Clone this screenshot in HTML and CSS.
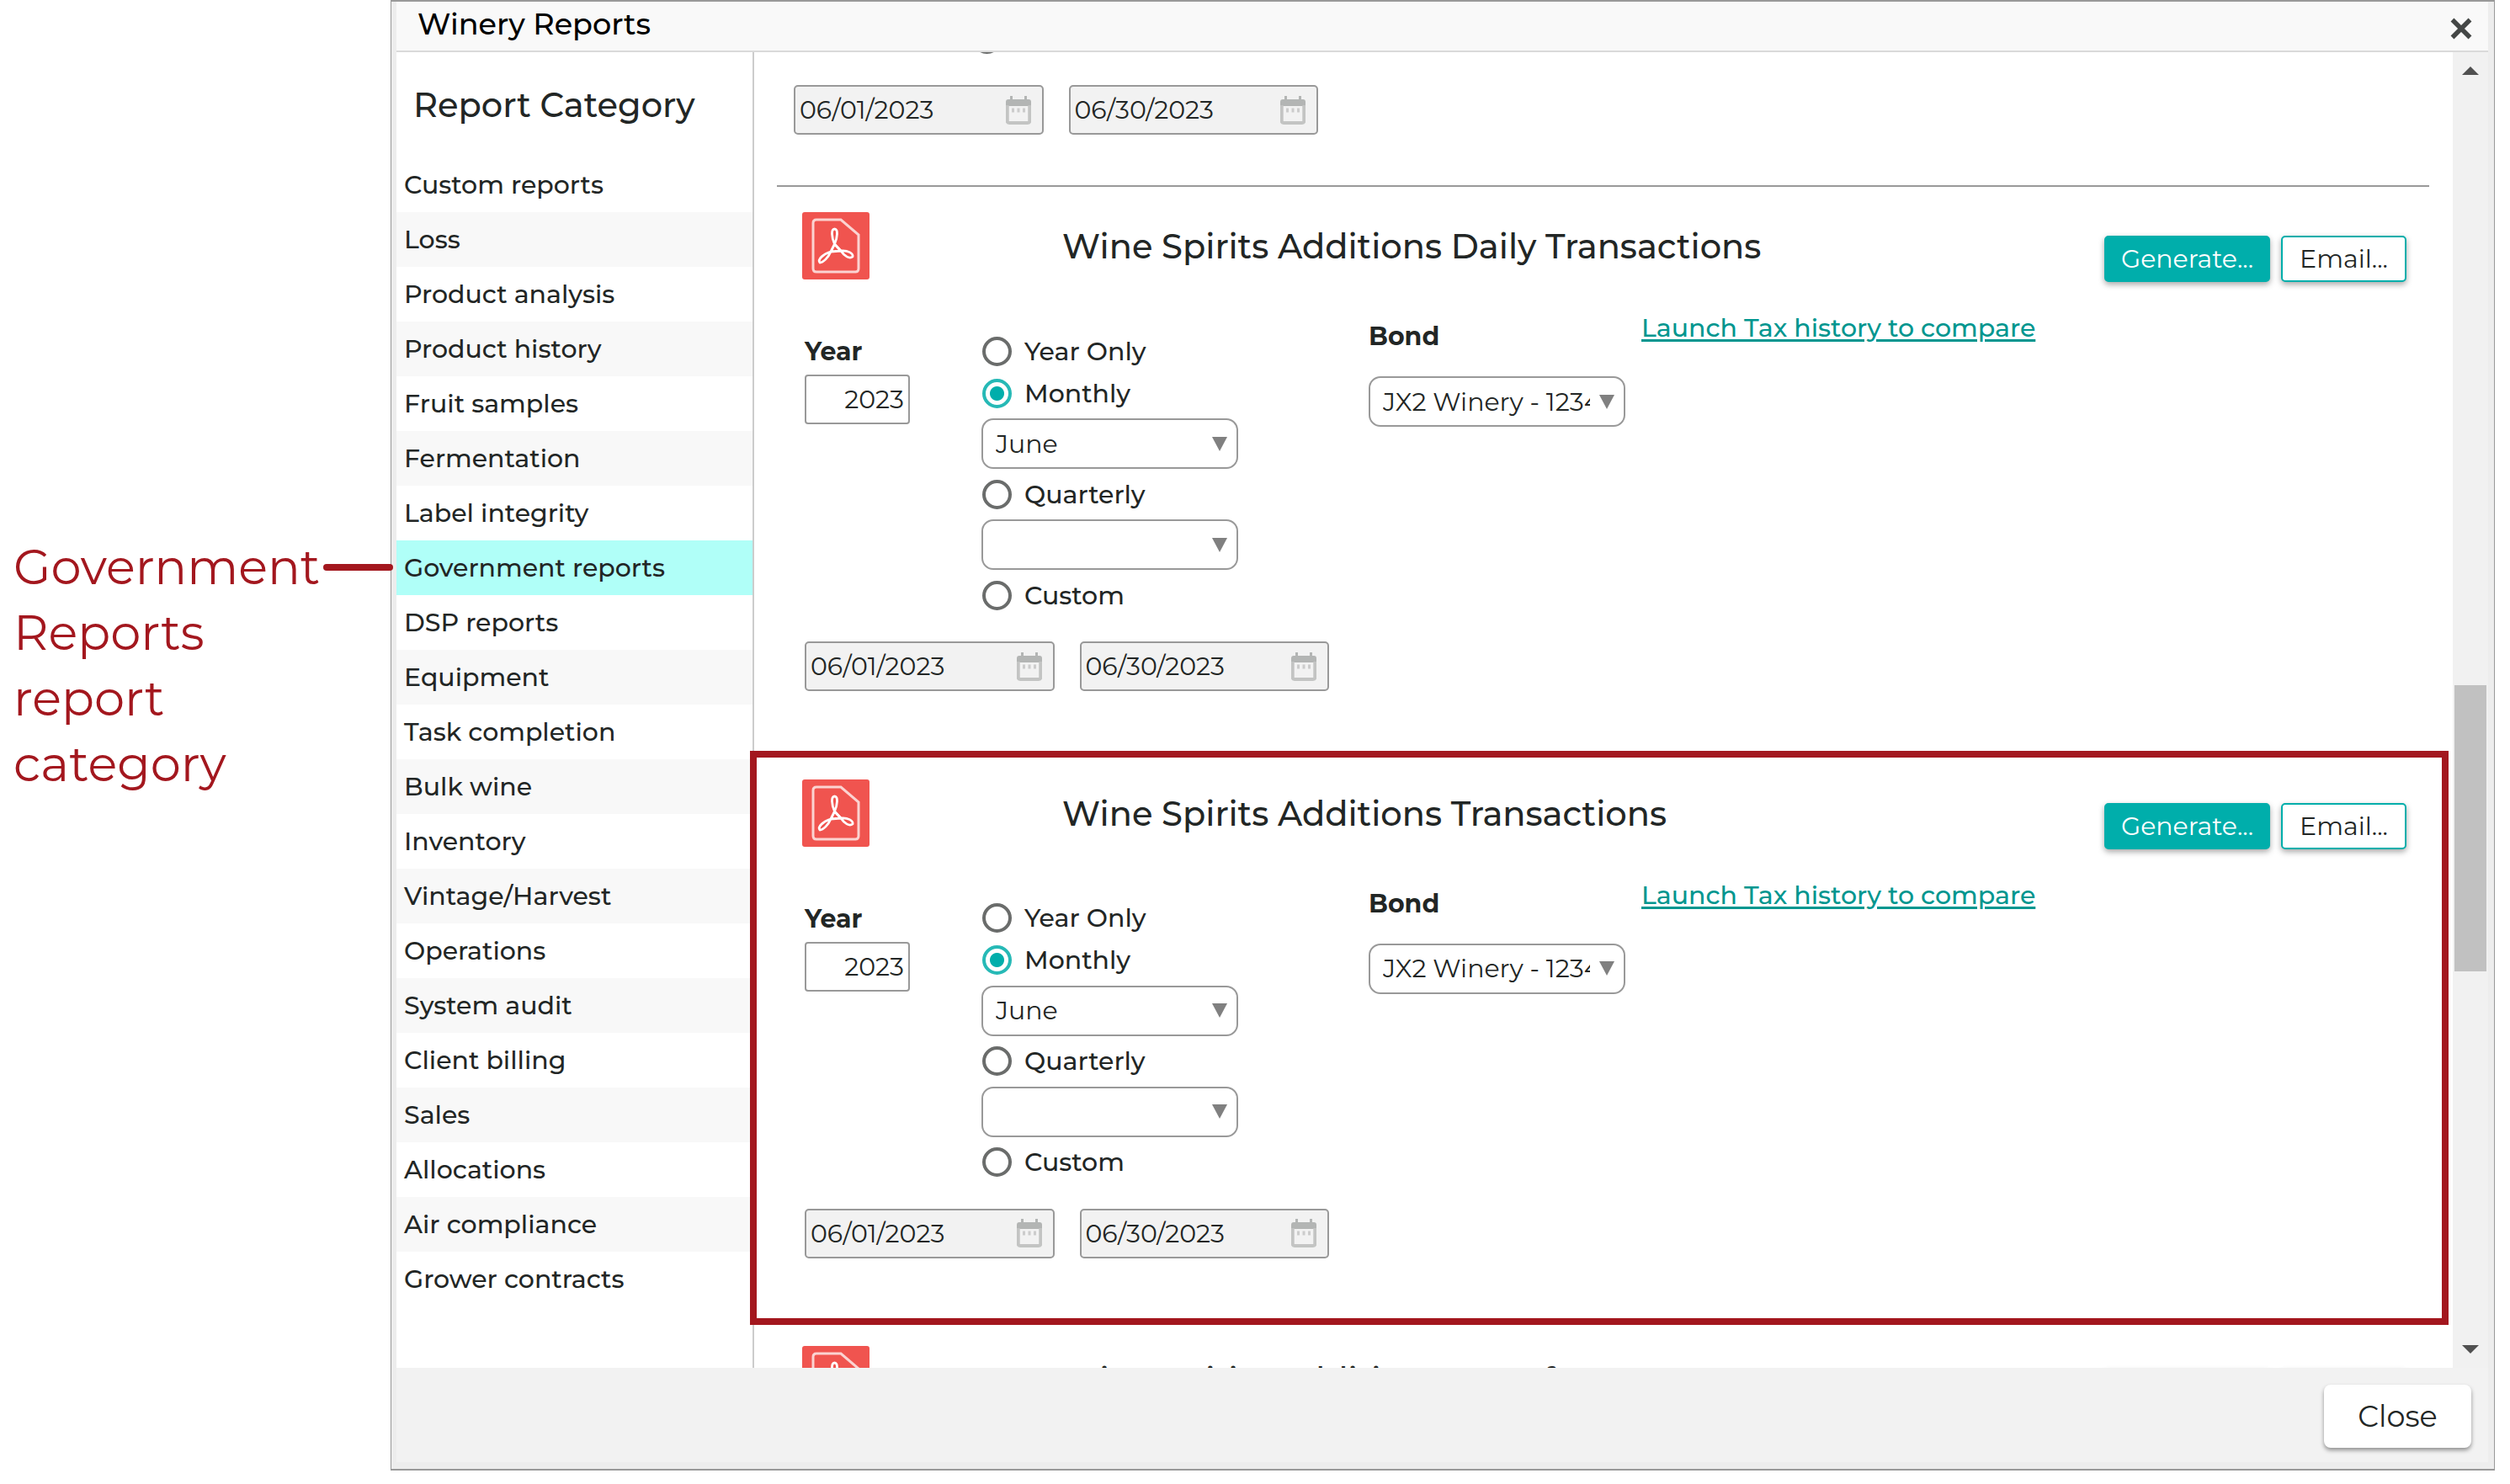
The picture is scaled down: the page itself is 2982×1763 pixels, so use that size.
FILE: index.html
```
<!DOCTYPE html>
<html lang="en">
  <head>
    <meta charset="utf-8">
    <title>Winery Reports</title>
    <link rel="stylesheet" href="styles.css">
  </head>
  <body>
    <svg class="sprite">
      <symbol id="pdf" viewBox="0 0 80 80">
        <rect width="80" height="80" rx="3" fill="#f0544f"/>
        <path d="M17 9H46L67 27V67Q67 71 63 71H17Q13 71 13 67V13Q13 9 17 9Z" fill="none" stroke="#fbd3d1" stroke-width="3"/>
        <path d="M38.500 38C35 30 34 20 38.500 20C43 20 42 30 38.500 38L34 47C31 54 25 60 21 60C18 56 25 50 34 47L46 46C54 45 61 49 60 53C56 56 50 52 46 46Z" fill="none" stroke="#fff" stroke-width="2.8" stroke-linejoin="round"/>
        <path d="M38.500 38L46 46" stroke="#fff" stroke-width="2.8"/>
      </symbol>
      <symbol id="calendar" viewBox="0 0 30 34">
        <path d="M5 0H8V4H22V0H25V4H27Q30 4 30 7V12H0V7Q0 4 3 4H5Z" fill="#b3b5b4"/>
        <path d="M1.700 11V29.500Q1.700 32 4 32H26Q28.300 32 28.300 29.500V11" fill="none" stroke="#c3c4c3" stroke-width="4"/>
        <path d="M7 17H10M13.500 17H16.500M20 17H23" stroke="#ccc" stroke-width="5"/>
      </symbol>
    </svg>

    <aside class="annotation">
      <span>Government</span>
      <span>Reports</span>
      <span>report</span>
      <span>category</span>
      <i class="pointer"></i>
    </aside>

    <div class="dialog">
      <header class="titlebar">
        <h1>Winery Reports</h1>
        <svg class="close-x" viewBox="0 0 26 26"><path d="M2.500 2.500L23.500 23.500M23.500 2.500L2.500 23.500" stroke="#444746" stroke-width="5.5"/></svg>
      </header>

      <div class="main">
        <nav class="categories">
          <h2>Report Category</h2>
          <ul>
            <li>Custom reports</li>
            <li>Loss</li>
            <li>Product analysis</li>
            <li>Product history</li>
            <li>Fruit samples</li>
            <li>Fermentation</li>
            <li>Label integrity</li>
            <li class="selected">Government reports</li>
            <li>DSP reports</li>
            <li>Equipment</li>
            <li>Task completion</li>
            <li>Bulk wine</li>
            <li>Inventory</li>
            <li>Vintage/Harvest</li>
            <li>Operations</li>
            <li>System audit</li>
            <li>Client billing</li>
            <li>Sales</li>
            <li>Allocations</li>
            <li>Air compliance</li>
            <li>Grower contracts</li>
          </ul>
        </nav>

        <div class="reports">
          <section class="report-tail">
            <div class="radio"><i></i></div>
            <div class="dates">
              <div class="date">06/01/2023<svg><use href="#calendar"/></svg></div>
              <div class="date">06/30/2023<svg><use href="#calendar"/></svg></div>
            </div>
          </section>

          <section class="report">
            <div class="report-head">
              <svg class="pdf"><use href="#pdf"/></svg>
              <h3>Wine Spirits Additions Daily Transactions</h3>
              <button class="btn primary">Generate...</button>
              <button class="btn">Email...</button>
            </div>
            <div class="report-body">
              <div class="period">
                <div class="period-options">
                  <div class="year">
                    <b>Year</b>
                    <div class="year-input">2023</div>
                  </div>
                  <div class="options">
                    <div class="radio"><i></i>Year Only</div>
                    <div class="radio checked"><i></i>Monthly</div>
                    <div class="select"><span>June</span></div>
                    <div class="radio"><i></i>Quarterly</div>
                    <div class="select"><span></span></div>
                    <div class="radio"><i></i>Custom</div>
                  </div>
                </div>
                <div class="dates">
                  <div class="date">06/01/2023<svg><use href="#calendar"/></svg></div>
                  <div class="date">06/30/2023<svg><use href="#calendar"/></svg></div>
                </div>
              </div>
              <div class="bond">
                <b>Bond</b>
                <div class="select"><span>JX2 Winery - 1234</span></div>
              </div>
              <a class="compare" href="#">Launch Tax history to compare</a>
            </div>
          </section>

          <section class="report">
            <div class="report-head">
              <svg class="pdf"><use href="#pdf"/></svg>
              <h3>Wine Spirits Additions Transactions</h3>
              <button class="btn primary">Generate...</button>
              <button class="btn">Email...</button>
            </div>
            <div class="report-body">
              <div class="period">
                <div class="period-options">
                  <div class="year">
                    <b>Year</b>
                    <div class="year-input">2023</div>
                  </div>
                  <div class="options">
                    <div class="radio"><i></i>Year Only</div>
                    <div class="radio checked"><i></i>Monthly</div>
                    <div class="select"><span>June</span></div>
                    <div class="radio"><i></i>Quarterly</div>
                    <div class="select"><span></span></div>
                    <div class="radio"><i></i>Custom</div>
                  </div>
                </div>
                <div class="dates">
                  <div class="date">06/01/2023<svg><use href="#calendar"/></svg></div>
                  <div class="date">06/30/2023<svg><use href="#calendar"/></svg></div>
                </div>
              </div>
              <div class="bond">
                <b>Bond</b>
                <div class="select"><span>JX2 Winery - 1234</span></div>
              </div>
              <a class="compare" href="#">Launch Tax history to compare</a>
            </div>
          </section>

          <section class="report">
            <div class="report-head">
              <svg class="pdf"><use href="#pdf"/></svg>
              <h3>Wine Spirits Additions Transfers</h3>
              <button class="btn primary">Generate...</button>
              <button class="btn">Email...</button>
            </div>
          </section>
        </div>

        <div class="scrollbar">
          <i class="arrow up"></i>
          <i class="thumb"></i>
          <i class="arrow down"></i>
        </div>
      </div>

      <footer>
        <button class="close">Close</button>
      </footer>

      <div class="highlight"></div>
    </div>
  </body>
</html>
```
FILE: styles.css
```
* { box-sizing: border-box; }

body {
  display: flex;
  height: 1763px;
  margin: 0;
  overflow: hidden;
  background: #fff;
  color: #222625;
  font-family: Montserrat, Inter, "Open Sans", sans-serif;
  font-size: 30px;
  font-weight: 500;
}

h1, h2, h3, ul {
  margin: 0;
  padding: 0;
  font-weight: 500;
  list-style: none;
}

button {
  padding: 0;
  font-family: inherit;
  font-weight: 400;
}

.sprite {
  position: absolute;
  width: 0;
  height: 0;
}

/* callout on the left */

.annotation {
  position: relative;
  flex: none;
  width: 464px;
  padding: 634px 0 0 16px;
  color: #a3171e;
  font-size: 57.5px;
  font-weight: 400;
  line-height: 78px;
}

.annotation span { display: block; }

.pointer {
  position: absolute;
  left: 384px;
  top: 670px;
  width: 83px;
  height: 8px;
  border-radius: 4px;
  background: #a3171e;
  z-index: 1;
}

/* dialog frame */

.dialog {
  position: relative;
  display: flex;
  flex-direction: column;
  width: 2500px;
  height: 1747px;
  padding: 0 7px 8px 6px;
  border: 1px solid #999;
  border-width: 2px 1px;
  background: #ededed;
}

.titlebar {
  display: flex;
  align-items: center;
  justify-content: space-between;
  height: 60px;
  padding: 0 19px 0 25px;
  border-bottom: 2px solid #dadada;
  background: #f9f9f9;
  color: #000;
}

.titlebar h1 {
  margin-top: -5px;
  font-size: 35px;
}

.close-x {
  width: 26px;
  height: 26px;
  margin-top: 6px;
}

.main {
  display: flex;
  height: 1563px;
  overflow: hidden;
  background: #fff;
}

/* category list */

.categories {
  width: 425px;
  border-right: 2px solid #ccc;
}

.categories h2 {
  height: 125px;
  padding-left: 20px;
  font-size: 40px;
  line-height: 126px;
}

.categories li {
  height: 65px;
  padding-left: 9px;
  line-height: 65px;
}

.categories li:nth-child(even) { background: #f8f8f8; }
.categories li.selected { background: #b0fff8; }

/* report list */

.reports {
  width: 2018px;
  padding: 0 28px 0 27px;
}

.report-tail {
  display: flow-root;
  height: 158px;
  padding-left: 20px;
}

.report-tail .radio {
  margin: -41px 0 0 211px;
}

.report {
  height: 673.5px;
  border-top: 2px solid #999;
}

.report-head {
  display: flex;
  height: 110px;
  padding: 30px 27px 0 30px;
}

.pdf {
  width: 80px;
  height: 80px;
}

.report-head h3 {
  flex: 1;
  padding-left: 229px;
  font-size: 40px;
  line-height: 82px;
}

.btn {
  flex: none;
  width: 149px;
  height: 55px;
  margin: 28px 0 0 13px;
  border: 2px solid #00aeab;
  border-radius: 5px;
  background: #fff;
  box-shadow: 0 3px 7px rgba(0, 0, 0, .35);
  color: #222625;
  font-size: 30px;
}

.btn.primary {
  width: 197px;
  background: #00aeab;
  color: #fff;
}

.report-body {
  display: flex;
  padding-left: 33px;
}

.period {
  width: 670px;
  padding-top: 60px;
}

.period-options { display: flex; }

.year { width: 210px; }

.year b, .bond b {
  display: block;
  font-weight: 700;
}

.year b {
  height: 53px;
  line-height: 51px;
}

.year-input {
  width: 125px;
  height: 59px;
  padding-right: 5px;
  border: 2px solid #999;
  border-radius: 4px;
  font-weight: 400;
  line-height: 55px;
  text-align: right;
}

.radio {
  display: flex;
  align-items: center;
  height: 50px;
}

.radio i {
  width: 35px;
  height: 35px;
  margin: 0 15px 0 1px;
  border: 4px solid #6a6c6b;
  border-radius: 50%;
}

.radio.checked i {
  border-color: #26b9b6;
  background: radial-gradient(circle, #00aeab 8px, #fff 9px);
}

.select {
  display: flex;
  align-items: center;
  justify-content: space-between;
  width: 305px;
  height: 60px;
  margin: 5px 0;
  padding: 0 11px 0 15px;
  border: 2px solid #999;
  border-radius: 14px;
  font-weight: 400;
}

.select span {
  width: 246px;
  overflow: hidden;
  white-space: nowrap;
}

.select::after {
  content: "";
  border: 9px solid transparent;
  border-top: 17px solid #808080;
  border-bottom: 0;
}

.dates {
  display: flex;
  gap: 30px;
  margin-top: 30px;
}

.date {
  display: flex;
  align-items: center;
  justify-content: space-between;
  width: 296.5px;
  height: 59px;
  padding: 0 13px 0 5px;
  border: 2px solid #999;
  border-radius: 5px;
  background: #f2f2f2;
  font-weight: 400;
}

.date svg {
  width: 30px;
  height: 34px;
}

.bond {
  width: 324px;
  padding-top: 51px;
}

.bond b {
  line-height: 34px;
}

.bond .select { margin-top: 30px; }

.compare {
  height: 34px;
  margin-top: 41px;
  color: #00968f;
  line-height: 34px;
  text-decoration-thickness: 3px;
  text-underline-offset: 3px;
}

/* scrollbar */

.scrollbar {
  display: flex;
  flex-direction: column;
  align-items: center;
  width: 42px;
  padding: 17px 0;
  background: #f1f1f1;
}

.arrow {
  border: 10px solid transparent;
}

.arrow.up {
  border-top: 0;
  border-bottom-color: #505050;
}

.arrow.down {
  margin-top: auto;
  border-bottom: 0;
  border-top-color: #505050;
}

.thumb {
  width: 38px;
  height: 340px;
  margin-top: 725px;
  background: #c1c1c1;
}

footer {
  display: flex;
  justify-content: flex-end;
  height: 112px;
  padding: 20px 20px 0;
  background: #f2f2f2;
}

.close {
  width: 175px;
  height: 75px;
  border: 0;
  border-radius: 8px;
  background: #fff;
  box-shadow: 0 3px 5px rgba(0, 0, 0, .4);
  color: #222625;
  font-size: 35px;
}

/* frame round the report being described */

.highlight {
  position: absolute;
  left: 426px;
  top: 890px;
  width: 2018px;
  height: 682px;
  border: 8px solid #a3171e;
}
```
